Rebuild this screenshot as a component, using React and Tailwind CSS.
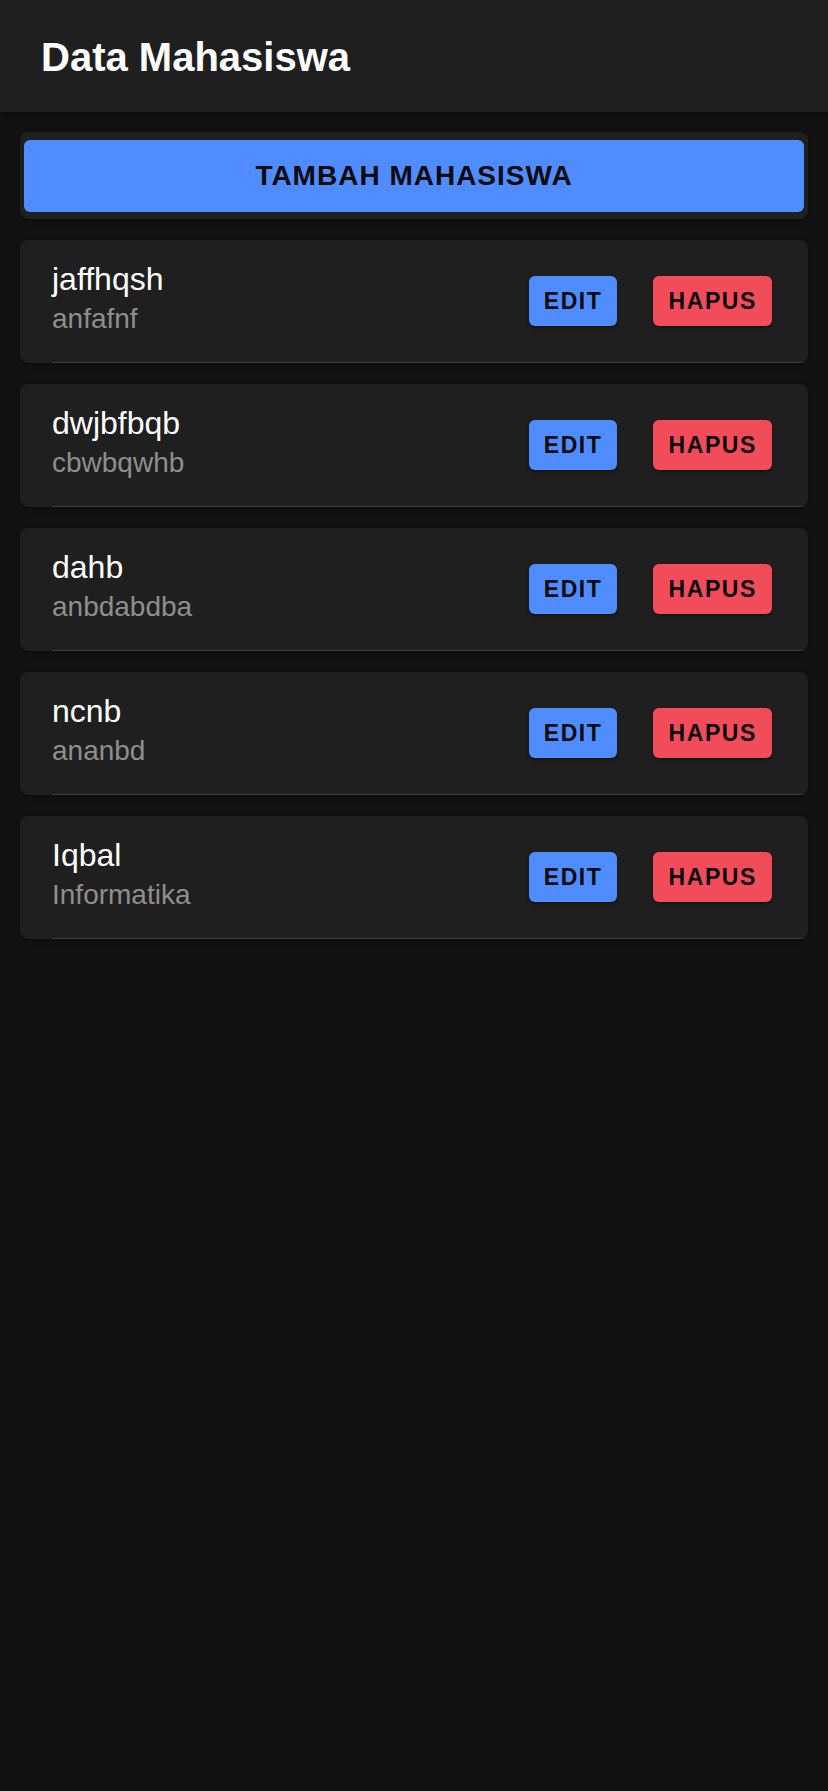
import React from 'react';

const mahasiswa = [
  { nama: 'jaffhqsh', jurusan: 'anfafnf' },
  { nama: 'dwjbfbqb', jurusan: 'cbwbqwhb' },
  { nama: 'dahb', jurusan: 'anbdabdba' },
  { nama: 'ncnb', jurusan: 'ananbd' },
  { nama: 'Iqbal', jurusan: 'Informatika' },
];

const App = () => {
  return (
    <div className="min-h-screen bg-[#121212] font-['Liberation_Sans',Arial,sans-serif]">
      {/* Header */}
      <div className="h-[112px] bg-[#1f1f1f] flex items-center pl-[41px] pt-[2px] shadow-[0_2px_6px_rgba(0,0,0,0.45)] relative">
        <h1 className="text-[40px] leading-none font-bold text-white">Data Mahasiswa</h1>
      </div>

      <div className="pt-[20px] px-[20px] flex flex-col gap-[21px]">
        {/* Tombol tambah */}
        <div className="w-[788px] bg-[#1f1f1f] rounded-lg px-[4px] pt-[8px] pb-[7px] shadow-[0_2px_4px_rgba(0,0,0,0.35)]">
          <button
            type="button"
            className="w-full h-[72px] rounded-md bg-[#4f8cff] text-[#0a0a0a] text-[28px] leading-none font-semibold tracking-[1px] flex items-center justify-center"
          >
            TAMBAH MAHASISWA
          </button>
        </div>

        {/* List mahasiswa */}
        {mahasiswa.map((m, i) => (
          <div
            key={i}
            className="w-[788px] h-[123px] bg-[#1f1f1f] rounded-lg overflow-hidden pl-[32px] shadow-[0_2px_4px_rgba(0,0,0,0.35)]"
          >
            <div className="h-[123px] border-b-[1.5px] border-[#3d3d3d] flex items-center justify-between pr-[36px]">
              <div className="flex flex-col pb-[7px]">
                <span className="text-[32px] leading-[38px] text-white">{m.nama}</span>
                <span className="text-[28px] leading-[34px] mt-[4px] text-[#8e8e8e]">{m.jurusan}</span>
              </div>
              <div className="flex items-center gap-[36px]">
                <button
                  type="button"
                  className="h-[50px] px-[15px] rounded-[6px] bg-[#4f8cff] text-[#0a0a0a] text-[23px] leading-none font-semibold tracking-[1.6px] shadow-[0_2px_3px_rgba(0,0,0,0.4)]"
                >
                  EDIT
                </button>
                <button
                  type="button"
                  className="h-[50px] px-[15px] rounded-[6px] bg-[#f24c5a] text-[#0a0a0a] text-[23px] leading-none font-semibold tracking-[1.6px] shadow-[0_2px_3px_rgba(0,0,0,0.4)]"
                >
                  HAPUS
                </button>
              </div>
            </div>
          </div>
        ))}
      </div>
    </div>
  );
};

export default App;
